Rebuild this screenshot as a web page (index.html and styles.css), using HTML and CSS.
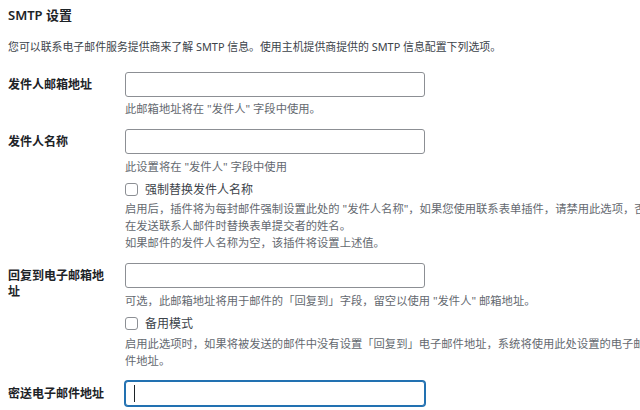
FILE: index.html
```html
<!DOCTYPE html>
<html lang="zh-CN">
<head>
<meta charset="utf-8">
<title>SMTP 设置</title>
<link rel="stylesheet" href="styles.css">
</head>
<body>
<div class="page">
  <h2 class="title">SMTP 设置</h2>
  <p class="intro">您可以联系电子邮件服务提供商来了解 SMTP 信息。使用主机提供商提供的 SMTP 信息配置下列选项。</p>

  <div class="form">
    <div class="row">
      <div class="label">发件人邮箱地址</div>
      <div class="field">
        <input class="text-input" type="text">
        <p class="desc desc-first">此邮箱地址将在 "发件人" 字段中使用。</p>
      </div>
    </div>

    <div class="row">
      <div class="label">发件人名称</div>
      <div class="field">
        <input class="text-input" type="text">
        <p class="desc">此设置将在 "发件人" 字段中使用</p>
        <label class="check"><input class="box" type="checkbox"><span>强制替换发件人名称</span></label>
        <p class="desc desc-block">启用后，插件将为每封邮件强制设置此处的 "发件人名称"，如果您使用联系表单插件，请禁用此选项，否则插件将会<br>在发送联系人邮件时替换表单提交者的姓名。<br>如果邮件的发件人名称为空，该插件将设置上述值。</p>
      </div>
    </div>

    <div class="row">
      <div class="label">回复到电子邮箱地址</div>
      <div class="field">
        <input class="text-input" type="text">
        <p class="desc">可选，此邮箱地址将用于邮件的「回复到」字段，留空以使用 "发件人" 邮箱地址。</p>
        <label class="check"><input class="box" type="checkbox"><span>备用模式</span></label>
        <p class="desc desc-block desc-block-b">启用此选项时，如果将被发送的邮件中没有设置「回复到」电子邮件地址，系统将使用此处设置的电子邮件作为回复邮<br>件地址。</p>
      </div>
    </div>

    <div class="row">
      <div class="label">密送电子邮件地址</div>
      <div class="field">
        <div class="focus-wrap">
          <input class="text-input is-focused" type="text">
          <span class="caret"></span>
        </div>
      </div>
    </div>
  </div>
</div>
</body>
</html>
```

FILE: styles.css
```css
html, body {
  margin: 0;
  padding: 0;
  background: #ffffff;
  overflow: hidden;
}

body {
  width: 640px;
  height: 410px;
  font-family: "Noto Sans", "Noto Sans CJK SC", sans-serif;
  color: #3c434a;
}

.page {
  padding: 6px 0 0 8px;
}

.title {
  margin: 0;
  font-size: 13px;
  line-height: 18px;
  font-weight: 600;
  color: #1d2327;
}

.intro {
  margin: 14px 0 0;
  font-size: 10.9px;
  line-height: 17px;
  color: #3c434a;
  white-space: nowrap;
}

.form {
  margin-top: 17px;
  display: flex;
  flex-direction: column;
  gap: 12px;
}

.row {
  display: flex;
}

.label {
  box-sizing: border-box;
  width: 117px;
  flex: none;
  padding: 5px 12px 0 0;
  font-size: 12px;
  line-height: 16px;
  font-weight: 700;
  color: #1d2327;
}

.field {
  flex: none;
  width: 515px;
  display: flex;
  flex-direction: column;
  align-items: flex-start;
}

.text-input {
  box-sizing: border-box;
  width: 300px;
  height: 25px;
  margin: 0;
  padding: 0 6px;
  border: 1px solid #8c8f94;
  border-radius: 3px;
  background: #ffffff;
  font: inherit;
  outline: none;
}

.text-input.is-focused {
  border-color: #2271b1;
  box-shadow: 0 0 0 1px #2271b1;
}

.focus-wrap {
  position: relative;
  width: 300px;
  height: 25px;
}

.caret {
  position: absolute;
  left: 9px;
  top: 4px;
  width: 1px;
  height: 17px;
  background: #1d2327;
}

.desc {
  margin: 4px 0 0;
  font-size: 11.3px;
  line-height: 17px;
  color: #646970;
  white-space: nowrap;
}

.desc-first {
  margin-top: 3px;
}

.desc-block {
  margin-top: 1px;
}

.desc-block-b {
  margin-top: 2px;
}

.check {
  margin-top: 4px;
  height: 20px;
  display: flex;
  align-items: center;
  gap: 7px;
  font-size: 12px;
  color: #3c434a;
  white-space: nowrap;
}

.box {
  appearance: none;
  -webkit-appearance: none;
  box-sizing: border-box;
  width: 13px;
  height: 13px;
  margin: 0;
  border: 1px solid #8c8f94;
  border-radius: 3px;
  background: #ffffff;
}
```
